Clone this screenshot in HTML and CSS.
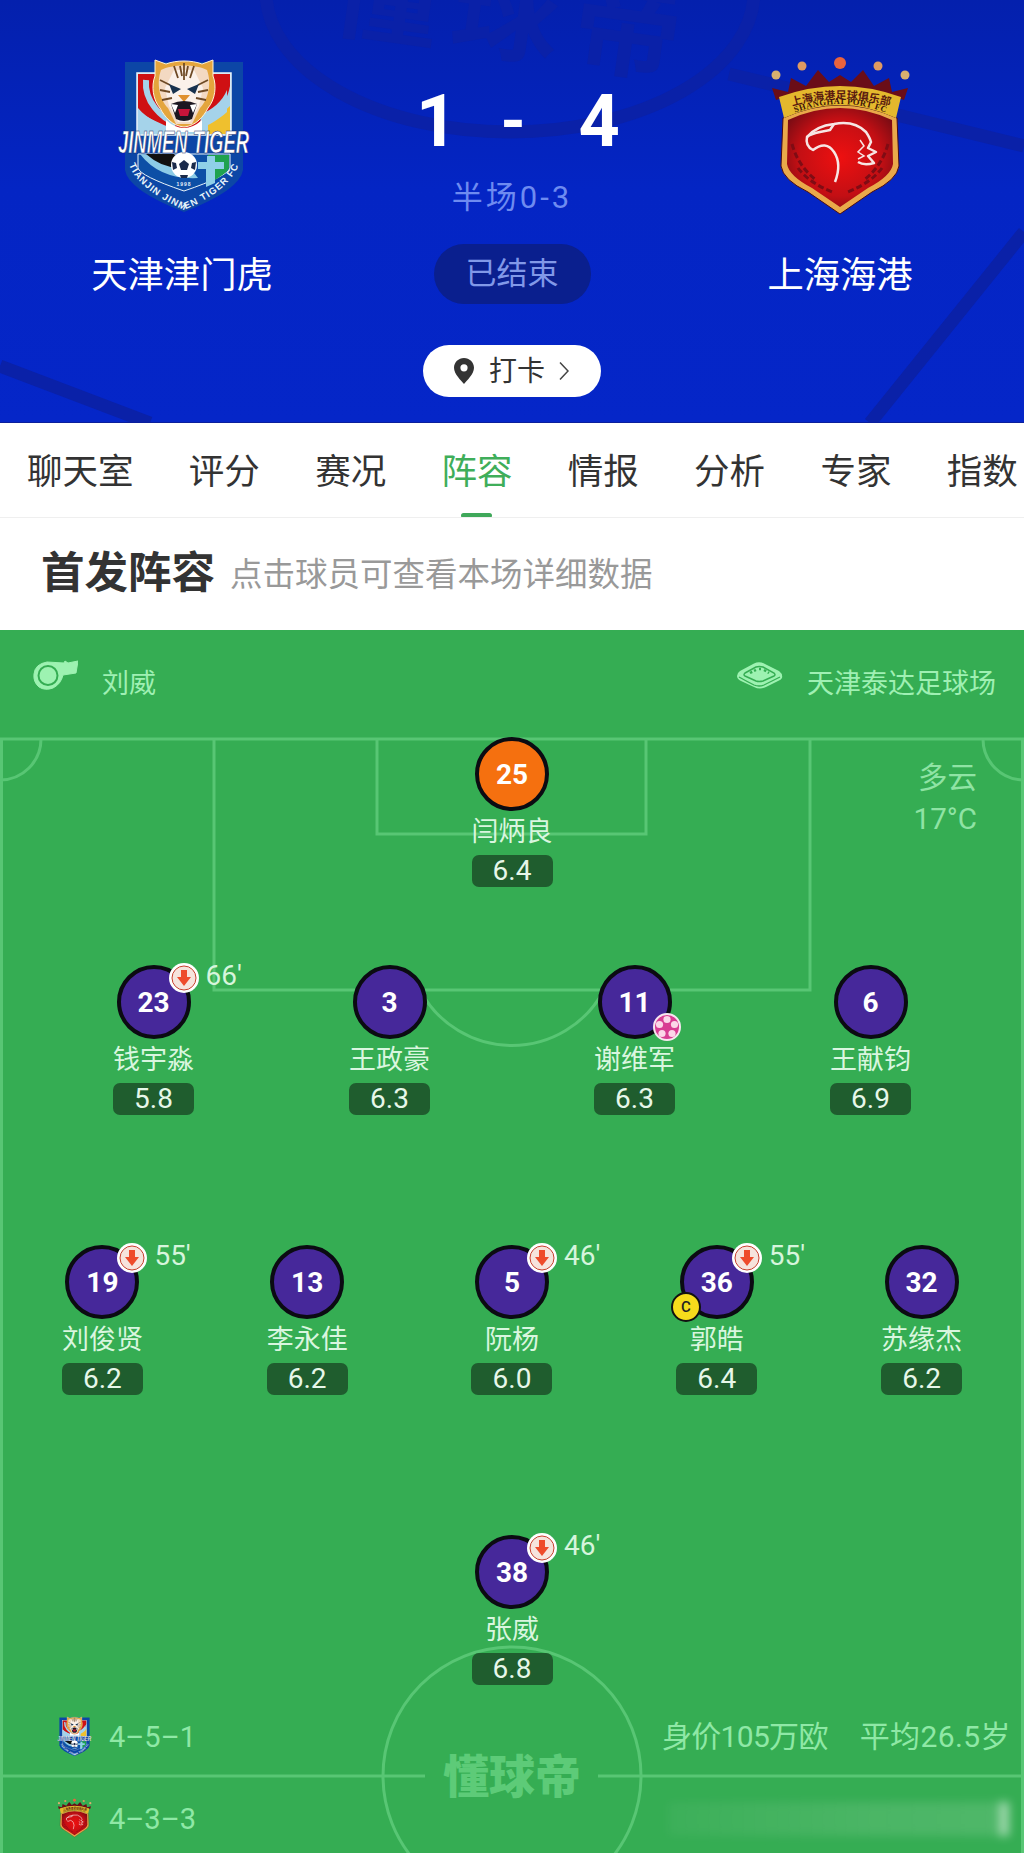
FILE: index.html
```html
<!DOCTYPE html>
<html lang="zh-CN">
<head>
<meta charset="utf-8">
<title>天津津门虎 1-4 上海海港</title>
<link rel="stylesheet" href="styles.css">
</head>
<body>
<svg class="defs" width="0" height="0" aria-hidden="true">
  <defs>
    <radialGradient id="portRed" cx="50%" cy="50%" r="60%">
      <stop offset="0" stop-color="#ee1010"/><stop offset=".65" stop-color="#c30f14"/><stop offset="1" stop-color="#7d0c14"/>
    </radialGradient>
    <symbol id="subIcon" viewBox="0 0 30 30">
      <circle cx="15" cy="15" r="15" fill="#fff"/>
      <circle cx="15" cy="15" r="12" fill="#f6e3dc" stroke="#c8402e" stroke-width="1"/>
      <path d="M12 7h6v7h4l-7 9-7-9h4z" fill="#ee4b2b"/>
    </symbol>
    <g id="tigerArt">
      <rect x="25" y="22" width="118" height="92" fill="#0c46a6"/>
      <path d="M25 112H143V130Q140 150 84 172Q28 150 25 130Z" fill="#0c46a6"/>
      <rect x="37" y="33" width="94" height="62" fill="#a5d3ea" stroke="#e9f4f9" stroke-width="1.5"/>
      <path d="M38 34H130V46C126 68 110 78 100 88H72C60 84 40 74 38 70Z" fill="#cf1013"/>
      <path d="M38 68C48 80 62 84 74 92H46L38 90Z" fill="#a5d3ea"/>
      <path d="M46 40C44 62 62 78 76 84" fill="none" stroke="#a5d3ea" stroke-width="6"/>
      <path d="M108 84C114 78 122 74 130 66V94H108Z" fill="#efc02e"/>
      <path d="M101 74C112 70 122 62 127 50V72C118 80 108 86 100 88Z" fill="#a5d3ea"/>
      <path d="M55 20L66 24C76 20 92 20 102 24L113 20L113 36C117 46 115 60 108 68C104 76 96 86 84 87C72 86 64 76 60 68C53 60 51 46 55 36Z" fill="#e4a53c" stroke="#fff2d8" stroke-width="1"/>
      <path d="M61 30C72 24 96 24 107 30C112 44 108 60 100 68L92 84H76L68 68C60 60 56 44 61 30Z" fill="#f3d9c2"/>
      <path d="M74 30H94L103 48L99 66L90 82H78L69 66L65 48Z" fill="#fbf1ea"/>
      <path d="M84 23V40M74 26L78 38M94 26L90 38M80 26L82 36M88 26L86 36M60 40L70 45M108 40L98 45M60 50L70 52M108 50L98 52M62 60L72 58M106 60L96 58" stroke="#6e4a26" stroke-width="1.800" fill="none"/>
      <path d="M69 44L81 49L73 54ZM99 44L87 49L95 54Z" fill="#18324f"/>
      <path d="M78 55H90L84 62Z" fill="#e0902e"/>
      <path d="M71 64Q84 58 97 64L92 79Q84 83 76 79Z" fill="#1c1620"/>
      <path d="M78 69H90L88 76H80Z" fill="#c8143a"/>
      <path d="M71 64L75 73L78 65M97 64L93 73L90 65" fill="#fff"/>
      <path d="M66 80Q84 96 102 80V92H66Z" fill="#fff"/>
      <path d="M38 114H130V128Q128 136 84 151Q40 136 38 128Z" fill="#0d4fa6" stroke="#e9f4f9" stroke-width="1"/>
      <path d="M40 114Q60 140 98 138L84 120Z" fill="#8ccbe6"/>
      <path d="M46 114Q64 130 84 127L74 114Z" fill="#111"/>
      <path d="M108 115H129V128Q127 134 107 144Z" fill="#1fa24f"/>
      <path d="M107 116H115V122H124V129H115V143L106 147V129H98V122H107Z" fill="#8fd0e8"/>
      <circle cx="84" cy="125" r="13" fill="#fff"/>
      <path d="M84 120l5 4-2 6h-6l-2-6zM72 122l4 1 1 5-4 2zM96 122l-4 1-1 5 4 2zM80 135h8l-1 3h-6z" fill="#1a2a4a"/>
      <text x="84" y="146" text-anchor="middle" class="crest-year">1998</text>
      <path id="tjArc" d="M27 116Q30 146 84 170Q136 148 141 116" fill="none"/>
      <text class="crest-ring"><textPath href="#tjArc" startOffset="50%" text-anchor="middle">TIANJIN JINMEN TIGER FC</textPath></text>
      <text x="18" y="113" textLength="131" lengthAdjust="spacingAndGlyphs" class="crest-name">JINMEN TIGER</text>
    </g>
    <g id="portArt">
      <circle cx="26" cy="35" r="4.5" fill="#d8b070"/>
      <circle cx="52" cy="26" r="4.5" fill="#df9a62"/>
      <circle cx="90" cy="23" r="6" fill="#e9633d"/>
      <circle cx="128" cy="26" r="4.5" fill="#df9a62"/>
      <circle cx="155" cy="35" r="4.5" fill="#d8b070"/>
      <path d="M26 60L22 48L38 52L41 38L56 46L68 30L79 42L90 35L101 42L113 30L124 46L139 38L142 52L158 48L154 60Q90 34 26 60Z" fill="#6a0d18"/>
      <path d="M33 78Q90 52 147 78L149 126Q147 140 122 152L90 174L58 152Q33 140 31 126Z" fill="#e9a94a" stroke="#4a0c12" stroke-width="1"/>
      <path d="M38 80Q90 56 142 80L143 124Q141 136 118 148L90 167L62 148Q39 136 37 124Z" fill="url(#portRed)"/>
      <path d="M48 128Q58 142 82 152M132 128Q122 142 98 152M42 104Q48 126 66 140M138 104Q132 126 114 140" stroke="#7f0c14" stroke-width="3" fill="none" stroke-dasharray="6 3"/>
      <path d="M29 57Q90 35 151 57L146 78Q90 52 34 78Z" fill="#e4b82d"/>
      <path id="portTop" d="M36 68Q90 50 146 68" fill="none"/>
      <path id="portBottom" d="M37 76Q90 52 144 76" fill="none"/>
      <text class="port-cn"><textPath href="#portTop" startOffset="50%" text-anchor="middle">上海海港足球俱乐部</textPath></text>
      <text class="port-en"><textPath href="#portBottom" startOffset="50%" text-anchor="middle">SHANGHAI PORT FC</textPath></text>
      <path d="M57 97Q66 86 84 84Q104 80 116 92Q120 98 121 102L118 108L126 112L118 116L124 123Q114 126 108 122" fill="none" stroke="#f7e6e4" stroke-width="2.500" stroke-linejoin="round"/>
      <path d="M84 84L80 90L70 92Q60 94 57 97Q55 106 63 110Q76 100 84 112Q92 124 85 142" fill="none" stroke="#f7e6e4" stroke-width="2.500" stroke-linejoin="round"/>
      <path d="M110 100L114 106L108 112L114 116L108 119" fill="none" stroke="#f7e6e4" stroke-width="1.500"/>
    </g>
  </defs>
</svg>

<header class="match">
  <svg class="match-art" viewBox="0 0 1024 423" aria-hidden="true">
    <ellipse cx="510" cy="-8" rx="244" ry="140" class="art-line"/>
    <path d="M729 74L1024 146M1024 232L870 423M0 366L150 423" class="art-line"/>
    <text x="510" y="52" text-anchor="middle" transform="rotate(8 510 40)" class="art-text">懂球帝</text>
  </svg>
  <div class="match-grid">
    <div class="team">
      <svg class="crest crest-home" viewBox="0 0 170 180" role="img" aria-label="天津津门虎队徽"><use href="#tigerArt"/></svg>
      <div class="team-name">天津津门虎</div>
    </div>

    <div class="center">
      <div class="score"><span class="score-home">1</span><span class="dash">-</span><span class="score-away">4</span></div>
      <div class="half">半场0-3</div>
      <div class="status">已结束</div>
    </div>

    <div class="team team-right">
      <svg class="crest crest-away" viewBox="0 0 170 180" role="img" aria-label="上海海港队徽"><use href="#portArt"/></svg>
      <div class="team-name">上海海港</div>
    </div>
  </div>
  <a class="checkin">
    <svg class="pin" viewBox="0 0 20 26" aria-hidden="true"><path fill-rule="evenodd" d="M10 0C4.5 0 0 4.4 0 9.8 0 16 7 22.500 10 26c3-3.500 10-10 10-16.200C20 4.400 15.500 0 10 0zm0 6.200a3.600 3.600 0 1 1 0 7.200 3.600 3.600 0 0 1 0-7.200z" fill="#333"/></svg>
    <span>打卡</span>
    <svg class="chev" viewBox="0 0 10 20" aria-hidden="true"><path d="M1 1.500L9 10 1 18.500" fill="none" stroke="#444" stroke-width="1.500"/></svg>
  </a>
</header>

<nav class="tabs">
  <a class="tab">聊天室</a><a class="tab">评分</a><a class="tab">赛况</a><a class="tab active">阵容</a><a class="tab">情报</a><a class="tab">分析</a><a class="tab">专家</a><a class="tab">指数</a>
</nav>

<section class="title-bar">
  <h2>首发阵容</h2>
  <p>点击球员可查看本场详细数据</p>
</section>

<main class="pitch">
  <svg class="lines" viewBox="0 0 1024 1223" aria-hidden="true">
    <path d="M1.500 109V1223M1022.500 109V1223M0 109H1024"/>
    <path d="M0 150A41 41 0 0 0 41 109M983 109A41 41 0 0 0 1024 150"/>
    <path d="M214 109V360H810V109"/>
    <path d="M377 109V204H646V109"/>
    <path d="M420 360A104 104 0 0 0 604 360"/>
    <circle cx="512" cy="1146" r="129"/>
    <path d="M0 1146H425M598 1146H1024"/>
  </svg>
  <div class="brand">懂球帝</div>

  <div class="info">
    <div class="info-item">
      <svg class="whistle" viewBox="0 0 45 30" aria-hidden="true">
        <path d="M14 2L31 3L32 1L35 3L45 1L43 13L30 15Q28 24 20 28Q12 31 6 27Q0 22 1 14Q2 4 14 2Z" fill="#9df2b1" stroke="#9df2b1" stroke-linejoin="round"/>
        <circle cx="15" cy="15.500" r="9.500" fill="#9df2b1" stroke="#35ad53" stroke-width="2"/>
      </svg>
      <span>刘威</span>
    </div>
    <div class="info-item">
      <svg class="stadium" viewBox="0 0 47 27" aria-hidden="true">
        <path d="M18 1.500Q23 -1 28 1.500L43 9Q47 12 46 16Q45 18 42 19L30 25Q24 28 18 25L5 19Q1 17 1 14Q1 11 4 9Z" fill="#9df2b1"/>
        <path d="M3 15Q10 19 18 23Q23 25 28 23L44 15" fill="none" stroke="#35ad53" stroke-width="1.300"/>
        <path d="M9 11L20 5Q23 4 27 5L38 11Q40 13 38 14L27 19Q23 20 20 19L9 14Q7 13 9 11Z" fill="none" stroke="#35ad53" stroke-width="1.500"/>
        <path d="M14 11L20 8M23 7L25 7M28 8L33 11" fill="none" stroke="#35ad53" stroke-width="2.500" stroke-dasharray="2.500 2"/>
      </svg>
      <span>天津泰达足球场</span>
    </div>
  </div>

  <div class="weather"><div>多云</div><div>17°C</div></div>

  <div class="row row-gk">
    <div class="player">
      <div class="kit kit-gk">25</div>
      <div class="name">闫炳良</div><div class="rating">6.4</div>
    </div>
  </div>

  <div class="row row-def">
    <div class="player">
      <div class="kit">23<svg class="badge-sub"><use href="#subIcon"/></svg><span class="minute">66'</span></div>
      <div class="name">钱宇淼</div><div class="rating">5.8</div>
    </div>
    <div class="player">
      <div class="kit">3</div>
      <div class="name">王政豪</div><div class="rating">6.3</div>
    </div>
    <div class="player">
      <div class="kit">11
        <svg class="badge-goal" viewBox="0 0 28 28" aria-hidden="true">
          <circle cx="14" cy="14" r="13" fill="#d83c92" stroke="#f6e6ef" stroke-width="2"/>
          <g fill="#fbd6e8"><circle cx="14" cy="6.500" r="3.600"/><circle cx="21.500" cy="11.500" r="3.600"/><circle cx="19" cy="20.500" r="3.600"/><circle cx="9" cy="20.500" r="3.600"/><circle cx="6.500" cy="11.500" r="3.600"/></g>
        </svg>
      </div>
      <div class="name">谢维军</div><div class="rating">6.3</div>
    </div>
    <div class="player">
      <div class="kit">6</div>
      <div class="name">王献钧</div><div class="rating">6.9</div>
    </div>
  </div>

  <div class="row row-mid">
    <div class="player">
      <div class="kit">19<svg class="badge-sub"><use href="#subIcon"/></svg><span class="minute">55'</span></div>
      <div class="name">刘俊贤</div><div class="rating">6.2</div>
    </div>
    <div class="player">
      <div class="kit">13</div>
      <div class="name">李永佳</div><div class="rating">6.2</div>
    </div>
    <div class="player">
      <div class="kit">5<svg class="badge-sub"><use href="#subIcon"/></svg><span class="minute">46'</span></div>
      <div class="name">阮杨</div><div class="rating">6.0</div>
    </div>
    <div class="player">
      <div class="kit">36<svg class="badge-sub"><use href="#subIcon"/></svg><span class="minute">55'</span><span class="captain">C</span></div>
      <div class="name">郭皓</div><div class="rating">6.4</div>
    </div>
    <div class="player">
      <div class="kit">32</div>
      <div class="name">苏缘杰</div><div class="rating">6.2</div>
    </div>
  </div>

  <div class="row row-fwd">
    <div class="player">
      <div class="kit">38<svg class="badge-sub"><use href="#subIcon"/></svg><span class="minute">46'</span></div>
      <div class="name">张威</div><div class="rating">6.8</div>
    </div>
  </div>

  <div class="formation">
    <div class="formation-left">
      <svg class="mini" viewBox="16 16 136 160" aria-hidden="true"><use href="#tigerArt"/></svg>
      <span>4–5–1</span>
    </div>
    <div class="formation-right"><span class="value">身价105万欧</span><span class="age">平均26.5岁</span></div>
  </div>
  <div class="formation formation-away">
    <div class="formation-left">
      <svg class="mini" viewBox="18 18 144 160" aria-hidden="true"><use href="#portArt"/></svg>
      <span>4–3–3</span>
    </div>
    <div class="smudge" aria-hidden="true"></div>
  </div>
</main>
</body>
</html>
```
FILE: styles.css
```css
* { box-sizing: border-box; }
html, body { margin: 0; padding: 0; }
body {
  width: 1024px;
  background: #fff;
  font-family: Roboto, "Noto Sans CJK SC", sans-serif;
  color: #333;
}
.defs { position: absolute; }

/* Match header */
.match {
  position: relative;
  height: 423px;
  overflow: hidden;
  background: linear-gradient(180deg, #0420ad 0%, #0425c4 45%, #0526c8 100%);
  border-bottom: 1px solid #0b1f9c;
}
.match-art { position: absolute; inset: 0; width: 1024px; height: 423px; }
.art-line { fill: none; stroke: #0a21a8; stroke-width: 13; }
.art-text { font: 700 108px "Noto Sans CJK SC", sans-serif; fill: #0a21a8; letter-spacing: 14px; }
.match-grid {
  position: relative;
  display: grid;
  grid-template-columns: 364px 296px 364px;
  height: 303px;
}
.team { display: flex; flex-direction: column; align-items: center; padding-top: 40px; }
.team-right { padding-right: 4px; }
.crest { width: 170px; height: 180px; display: block; flex: none; }
.crest-home { margin-left: 6px; }
.crest-away { margin-right: 10px; }
.crest-name { font: italic 700 31px "Liberation Sans", sans-serif; fill: #fff; stroke: #14265c; stroke-width: .6px; }
.crest-ring { font: 700 9.500px "Liberation Sans", sans-serif; fill: #e8f4fa; letter-spacing: 1px; }
.crest-year { font: 700 5px "Liberation Sans", sans-serif; fill: #e8f4fa; letter-spacing: 1px; }
.port-cn { font: 700 11px "Noto Sans CJK SC", sans-serif; fill: #5a1a10; }
.port-en { font: 700 8.500px "Liberation Serif", serif; fill: #3a1208; letter-spacing: .5px; }
.team-name {
  margin-top: 36px;
  font-size: 36.300px;
  line-height: 40px;
  color: #fff;
  white-space: nowrap;
}
.center { display: flex; flex-direction: column; align-items: center; padding-top: 82px; }
.score {
  display: flex;
  gap: 55px;
  align-items: center;
  height: 80px;
  padding-left: 12px;
  font-size: 72px;
  line-height: 80px;
  font-weight: 700;
  color: #fff;
}
.score-home { margin-right: -12px; }
.score-away { margin-left: -2px; }
.score .dash { font-size: 64px; }
.half {
  margin-top: 16px;
  font-size: 31px;
  letter-spacing: 3px;
  line-height: 40px;
  color: #6e8bf0;
}
.status {
  margin-top: 26px;
  width: 157px;
  height: 60px;
  border-radius: 30px;
  background: #0a1f8e;
  color: #8198e8;
  font-size: 31px;
  line-height: 60px;
  text-align: center;
}
.checkin {
  position: relative;
  display: flex;
  align-items: center;
  width: 178px;
  height: 52px;
  margin: 42px auto 0;
  padding-left: 31px;
  border-radius: 26px;
  background: #fff;
  color: #333;
  font-size: 28px;
  line-height: 50px;
}
.pin { width: 20px; height: 26px; flex: none; }
.checkin span { margin: 1px 0 0 15px; width: 55px; white-space: nowrap; }
.chev { width: 10px; height: 20px; margin-left: 15px; flex: none; }

/* Tabs */
.tabs {
  position: relative;
  display: flex;
  gap: 55.300px;
  height: 95px;
  padding: 27px 0 0 27px;
  background: #fff;
  border-bottom: 1px solid #efefef;
  overflow: hidden;
}
.tab {
  position: relative;
  height: 68px;
  font-size: 35.500px;
  line-height: 44px;
  color: #333;
  white-space: nowrap;
}
.tab.active { color: #3fae5a; }
.tab.active::after {
  content: "";
  position: absolute;
  left: 20px;
  bottom: 0;
  width: 31px;
  height: 5px;
  border-radius: 3px;
  background: #3fa85a;
}

/* Title */
.title-bar {
  display: flex;
  align-items: center;
  gap: 15px;
  height: 112px;
  padding: 0 0 1px 41px;
  background: #fff;
}
.title-bar h2 { margin: 0; font-size: 43.500px; line-height: 50px; font-weight: 700; color: #333; }
.title-bar p { margin: 3px 0 0; font-size: 32.500px; line-height: 44px; color: #999; white-space: nowrap; }

/* Pitch */
.pitch {
  position: relative;
  height: 1223px;
  overflow: hidden;
  background: #35ad53;
}
.lines { position: absolute; inset: 0; width: 1024px; height: 1223px; fill: none; stroke: #58c674; stroke-width: 3; }
.brand {
  position: absolute;
  left: 432px;
  top: 1119px;
  width: 160px;
  font-size: 46px;
  line-height: 56px;
  font-weight: 900;
  color: #5dcb78;
  text-align: center;
  white-space: nowrap;
}
.info {
  position: relative;
  display: flex;
  justify-content: space-between;
  height: 107px;
  padding: 30px 28px 0 33px;
}
.info-item { display: flex; align-items: flex-start; font-size: 27px; line-height: 36px; color: #9ff0b3; }
.whistle { width: 45px; height: 30px; margin-right: 24px; }
.stadium { width: 47px; height: 27px; margin: 2px 24px 0 -2px; }
.info-item span { margin-top: 6px; }
.weather {
  position: absolute;
  top: 128px;
  right: 47px;
  font-size: 29.500px;
  line-height: 41px;
  color: #8fe3a4;
  text-align: right;
}
.row { position: relative; display: flex; }
.row-gk, .row-fwd { justify-content: center; }
.row-def {
  display: grid;
  grid-template-columns: 236px 245px 236px 81px;
  margin-top: 78px;
  padding-left: 113px;
}
.row-mid { justify-content: space-around; margin-top: 130px; }
.row-fwd { margin-top: 140px; }
.player { position: relative; display: flex; flex-direction: column; align-items: center; width: 81px; height: 150px; }
.kit {
  position: relative;
  width: 74px;
  height: 74px;
  border: 4px solid #0b0b12;
  border-radius: 50%;
  background: #46289a;
  color: #fff;
  font-size: 28px;
  font-weight: 700;
  line-height: 68px;
  text-align: center;
}
.kit-gk { background: #f5700f; }
.badge-sub { position: absolute; left: 48px; top: -6px; width: 30px; height: 30px; }
.badge-goal { position: absolute; left: 51px; top: 44px; width: 28px; height: 28px; }
.minute {
  position: absolute;
  left: 85px;
  top: -11px;
  font-size: 28px;
  line-height: 36px;
  font-weight: 400;
  color: #d6f5dc;
}
.captain {
  position: absolute;
  left: -13px;
  top: 43px;
  width: 30px;
  height: 30px;
  border: 2px solid #111;
  border-radius: 50%;
  background: #f6dc1c;
  color: #222;
  font-size: 15px;
  line-height: 26px;
  font-weight: 500;
}
.name {
  margin-top: 3px;
  font-size: 27px;
  line-height: 36px;
  color: #d9f6df;
  white-space: nowrap;
}
.rating {
  margin-top: 5px;
  width: 81px;
  height: 32px;
  border-radius: 7px;
  background: #1f5d2e;
  color: #e6f7e9;
  font-size: 28px;
  line-height: 32px;
  text-align: center;
}
.formation {
  position: relative;
  display: flex;
  align-items: center;
  justify-content: space-between;
  height: 41px;
  margin-top: 31px;
  padding: 0 13px 0 57px;
  font-size: 29px;
  color: #8fe8a6;
}
.formation-away { margin-top: 41px; }
.formation-left { display: flex; align-items: center; gap: 17px; }
.mini { width: 35px; height: 41px; flex: none; }
.formation-right { display: flex; gap: 32px; margin-bottom: 6px; font-size: 30px; white-space: nowrap; }
.value { letter-spacing: -.7px; }
.age { letter-spacing: .4px; }
.smudge {
  width: 343px;
  height: 34px;
  background: linear-gradient(90deg, rgba(255,255,255,.04), rgba(255,255,255,.11) 60%, rgba(255,255,255,.13) 96%, rgba(255,255,255,.7) 98%, rgba(255,255,255,.05));
  filter: blur(5px);
}
```
